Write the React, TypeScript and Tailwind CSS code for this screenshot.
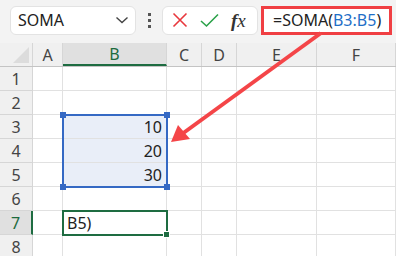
const font = { fontFamily: '"Noto Sans", "Open Sans", sans-serif' };

const cols = [
  { label: 'A', w: 'w-[30px]' },
  { label: 'B', w: 'w-[104px]' },
  { label: 'C', w: 'w-[35px]' },
  { label: 'D', w: 'w-[35px]' },
  { label: 'E', w: 'w-[80px]' },
  { label: 'F', w: 'flex-1' },
];

const cells: Record<string, { text: string; align: 'left' | 'right' }> = {
  '3B': { text: '10', align: 'right' },
  '4B': { text: '20', align: 'right' },
  '5B': { text: '30', align: 'right' },
  '7B': { text: 'B5)', align: 'left' },
};

function TopBar() {
  return (
    <div className="h-[43px] bg-[#f3f3f3] flex items-center gap-0 pl-[10px] pb-[3px]">
      <div className="w-[126px] h-[29px] bg-white border border-[#e3e3e3] rounded-[6px] flex items-center justify-between pl-[7px] pr-[6px]">
        <span className="text-[16px] text-[#222]">SOMA</span>
        <svg width="14" height="10" viewBox="0 0 14 10">
          <path d="M1.5 2.5 L7 7.5 L12.5 2.5" fill="none" stroke="#444" strokeWidth="1.4" />
        </svg>
      </div>
      <div className="w-[26px] flex flex-col items-center gap-[3px]">
        <span className="w-[3px] h-[3px] bg-[#555]" />
        <span className="w-[3px] h-[3px] bg-[#555]" />
        <span className="w-[3px] h-[3px] bg-[#555]" />
      </div>
      <div className="w-[96px] h-[29px] bg-white border border-[#e3e3e3] rounded-[6px] flex items-center pl-[9px] gap-[12px]">
        <svg width="16" height="16" viewBox="0 0 16 16">
          <path d="M1.5 1.5 L14.5 14.5 M14.5 1.5 L1.5 14.5" stroke="#e8383d" strokeWidth="1.6" />
        </svg>
        <svg width="19" height="15" viewBox="0 0 19 15">
          <path d="M1 8 L6.5 13 L18 1.5" fill="none" stroke="#2ba24a" strokeWidth="1.6" />
        </svg>
        <span className="text-[19px] italic text-[#333] leading-none" style={{ fontFamily: '"Liberation Serif", serif' }}>
          <span className="font-semibold">f</span>x
        </span>
      </div>
      <div className="ml-[3px] w-[131px] h-[29px] bg-white border-[3px] border-[#f03f43] flex items-center pl-[9px]">
        <span className="text-[16px] text-[#222]">
          =SOMA(<span className="text-[#1f6fc7]">B3:B5</span>)
        </span>
      </div>
    </div>
  );
}

export default function App() {
  const rows = [1, 2, 3, 4, 5, 6, 7, 8];
  return (
    <div className="w-[396px] h-[256px] overflow-hidden bg-white relative" style={font}>
      <TopBar />
      <div className="relative">
        {/* header row */}
        <div className="flex h-[24px] bg-[#f0f0f0] border-b border-[#c4c4c4]">
          <div className="w-[33px] border-r border-[#d6d6d6] relative overflow-hidden">
            <svg className="absolute right-[3px] bottom-[3px]" width="16" height="16" viewBox="0 0 16 16">
              <path d="M16 0 L16 16 L0 16 Z" fill="#dcdcdc" />
            </svg>
          </div>
          {cols.map((c) => (
            <div
              key={c.label}
              className={`${c.w} flex items-center justify-center text-[16px] border-r border-[#d6d6d6] ${
                c.label === 'B' ? 'bg-[#e0e0e0] text-[#1d6b3e] border-b-2 border-b-[#1e6c41]' : 'text-[#444]'
              }`}
            >
              {c.label}
            </div>
          ))}
        </div>
        {rows.map((r) => (
          <div key={r} className="flex h-[24px]">
            <div
              className={`w-[33px] flex items-center justify-center text-[16px] border-b border-r ${
                r === 7
                  ? 'bg-[#e0e0e0] text-[#1d6b3e] border-r-2 border-r-[#1e6c41] border-b-[#d6d6d6]'
                  : 'bg-[#f0f0f0] text-[#444] border-[#d6d6d6]'
              }`}
            >
              {r}
            </div>
            {cols.map((c) => {
              const cell = cells[`${r}${c.label}`];
              const sel = c.label === 'B' && r >= 3 && r <= 5;
              return (
                <div
                  key={c.label}
                  className={`${c.w} border-r border-b border-[#e1e1e1] flex items-center text-[16px] text-[#222] px-[4px] ${
                    sel ? 'bg-[#e9eef8]' : ''
                  } ${cell?.align === 'right' ? 'justify-end' : 'justify-start'}`}
                >
                  {cell?.text}
                </div>
              );
            })}
          </div>
        ))}

        {/* selection B3:B5 */}
        <div className="absolute left-[62px] top-[71px] w-[106px] h-[74px] border-2 border-[#3569c4]" />
        <div className="absolute left-[60px] top-[69px] w-[6px] h-[6px] bg-[#3569c4]" />
        <div className="absolute left-[164px] top-[69px] w-[6px] h-[6px] bg-[#3569c4]" />
        <div className="absolute left-[60px] top-[141px] w-[6px] h-[6px] bg-[#3569c4]" />
        <div className="absolute left-[164px] top-[141px] w-[6px] h-[6px] bg-[#3569c4]" />

        {/* active cell B7 */}
        <div className="absolute left-[62px] top-[167px] w-[106px] h-[26px] border-2 border-[#1e6c41]" />
        <div className="absolute left-[164px] top-[189px] w-[5px] h-[5px] bg-[#1e6c41] outline outline-1 outline-white" />
      </div>

      {/* arrow */}
      <svg className="absolute left-0 top-0 pointer-events-none" width="396" height="256" viewBox="0 0 396 256">
        <line x1="321" y1="33" x2="182" y2="134" stroke="#f44548" strokeWidth="4" />
        <path d="M171 142 L178 125 L190 139 Z" fill="#f44548" />
      </svg>
    </div>
  );
}
